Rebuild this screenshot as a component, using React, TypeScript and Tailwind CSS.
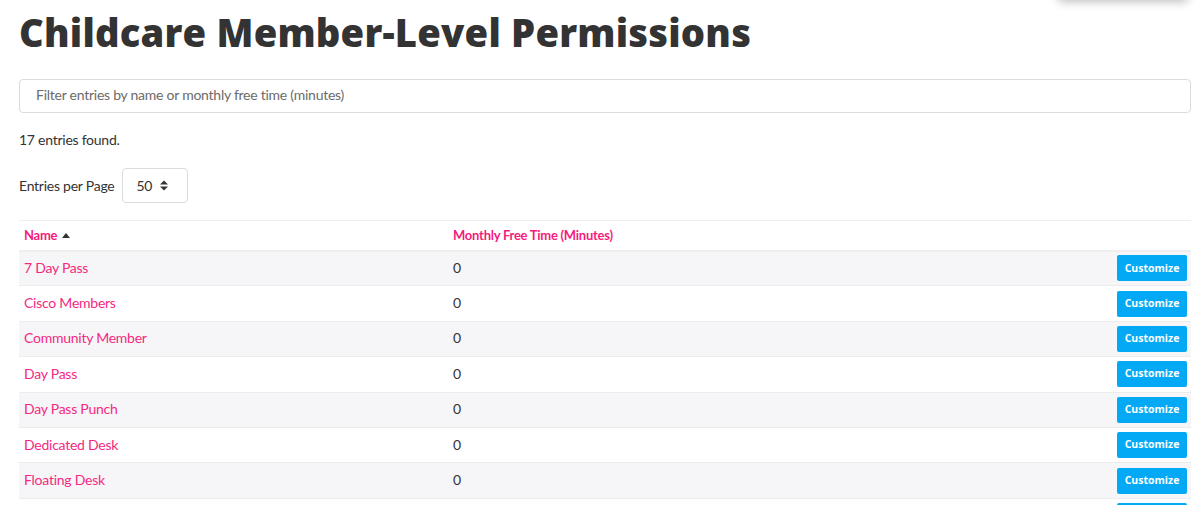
import React from "react";

const rows = [
  { name: "7 Day Pass", minutes: 0 },
  { name: "Cisco Members", minutes: 0 },
  { name: "Community Member", minutes: 0 },
  { name: "Day Pass", minutes: 0 },
  { name: "Day Pass Punch", minutes: 0 },
  { name: "Dedicated Desk", minutes: 0 },
  { name: "Floating Desk", minutes: 0 },
  { name: "Hot Desk", minutes: 0 },
];

function SortUp() {
  return (
    <svg width="8" height="5" viewBox="0 0 8 5" className="ml-[5px]">
      <path d="M0 5 L4 0 L8 5 Z" fill="#333" />
    </svg>
  );
}

function SelectArrows() {
  return (
    <svg width="8" height="11" viewBox="0 0 8 11">
      <path d="M0 4.5 L4 0.5 L8 4.5 Z" fill="#333" />
      <path d="M0 6.5 L4 10.5 L8 6.5 Z" fill="#333" />
    </svg>
  );
}

export default function App() {
  return (
    <div className="relative h-[505px] overflow-hidden bg-white px-[19px] pr-[9px] font-['Lato',sans-serif] text-[14px] tracking-[-0.25px] text-[#333]">
      {/* shadow of a floating panel above the viewport */}
      <div className="absolute right-[12px] top-[-40px] h-[40px] w-[130px] rounded bg-white shadow-[0_2px_10px_rgba(0,0,0,0.25)]" />

      <h1 className="pt-[9px] font-['Open_Sans',sans-serif] text-[38.2px] font-extrabold leading-[46px] tracking-[0.2px] text-[#333]">
        Childcare Member-Level Permissions
      </h1>

      <div className="mt-[24px] flex h-[34px] items-center rounded border border-[#dcdcdc] px-[16px] pb-[3px] text-[#6b6b6b]">
        Filter entries by name or monthly free time (minutes)
      </div>

      <p className="mt-[17px] leading-[20px]">17 entries found.</p>

      <div className="mt-[18px] flex items-center gap-[8px]">
        <span>Entries per Page</span>
        <div className="flex h-[35px] w-[66px] items-center justify-between rounded border border-[#dcdcdc] pl-[13px] pr-[19px]">
          <span>50</span>
          <SelectArrows />
        </div>
      </div>

      <table className="mt-[17px] w-full table-fixed border-collapse">
        <thead>
          <tr className="h-[30px] border-t border-b-2 border-t-[#eeeeee] border-b-[#eeeeee] text-left text-[13px] font-bold text-[#f51c7c]">
            <th className="w-[434px] pl-[5px] font-bold">
              <span className="flex items-center">
                Name
                <SortUp />
              </span>
            </th>
            <th className="font-bold">Monthly Free Time (Minutes)</th>
            <th className="w-[200px]" />
          </tr>
        </thead>
        <tbody>
          {rows.map((row, i) => (
            <tr
              key={row.name}
              className={
                "h-[35.4px] border-b border-[#ececec] " +
                (i % 2 === 0 ? "bg-[#f6f6f8]" : "bg-white")
              }
            >
              <td className="pb-[2px] pl-[5px] text-[#f5297f]">{row.name}</td>
              <td className="pb-[2px]">{row.minutes}</td>
              <td className="pr-[4px] text-right">
                <button className="inline-flex h-[26px] w-[70px] items-center justify-center rounded-[2px] bg-[#03a9f4] font-['Open_Sans',sans-serif] text-[10.5px] font-bold tracking-normal text-white">
                  Customize
                </button>
              </td>
            </tr>
          ))}
        </tbody>
      </table>
    </div>
  );
}
